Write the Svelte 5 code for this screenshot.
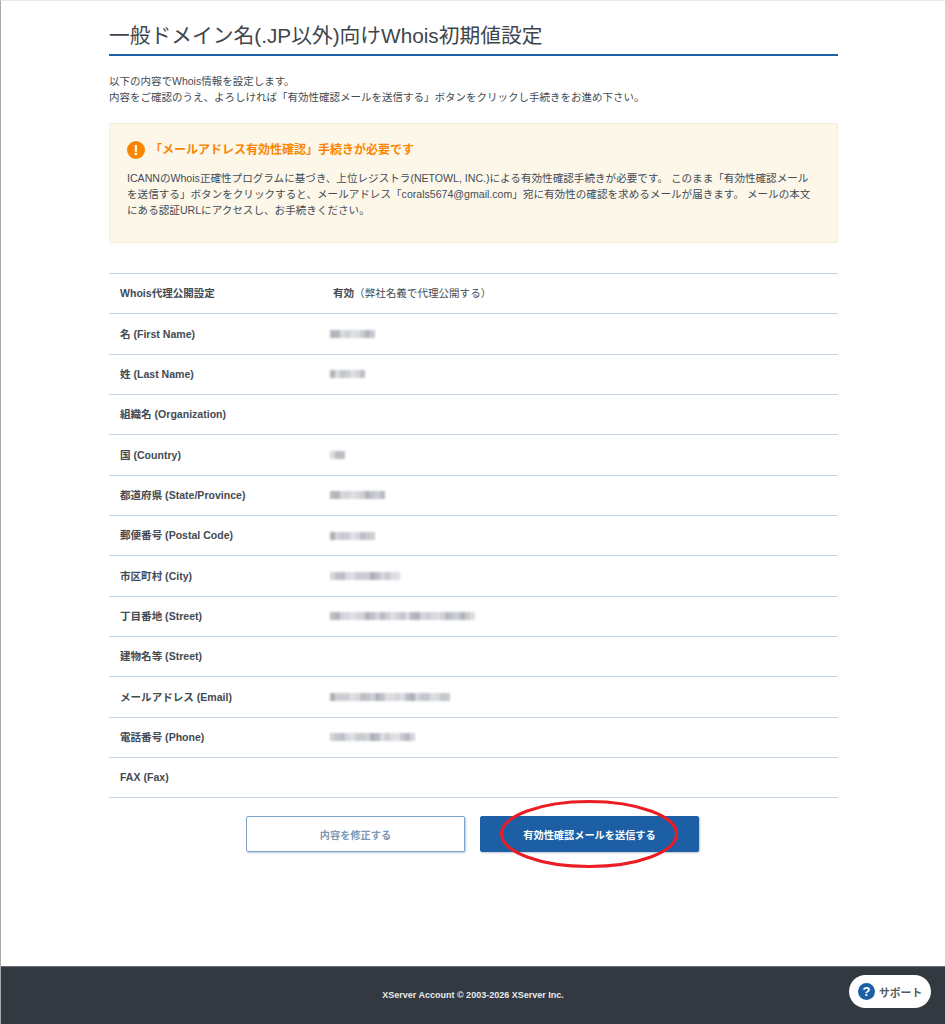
<script>
  // values are masked in the source, so each one is a strip of grey cells
  const mask = (seed, n) => Array.from({ length: n }, (_, i) => {
    const v = Math.abs(Math.sin(seed * 7.3 + i * 1.37) + Math.sin(seed + i * 0.61)) / 2;
    return (0.22 + v * 0.36).toFixed(2);
  });

  const rows = [
    { label: 'Whois代理公開設定', strong: '有効', text: '（弊社名義で代理公開する）' },
    { label: '名 (First Name)', cells: 9, seed: 1 },
    { label: '姓 (Last Name)', cells: 7, seed: 2 },
    { label: '組織名 (Organization)' },
    { label: '国 (Country)', cells: 3, seed: 3 },
    { label: '都道府県 (State/Province)', cells: 11, seed: 4 },
    { label: '郵便番号 (Postal Code)', cells: 9, seed: 5 },
    { label: '市区町村 (City)', cells: 14, seed: 6 },
    { label: '丁目番地 (Street)', cells: 29, seed: 7 },
    { label: '建物名等 (Street)' },
    { label: 'メールアドレス (Email)', cells: 24, seed: 8 },
    { label: '電話番号 (Phone)', cells: 17, seed: 9 },
    { label: 'FAX (Fax)' }
  ];
</script>

<div class="page">
  <main class="content">
    <h1>一般ドメイン名(.JP以外)向けWhois初期値設定</h1>

    <p class="lead">
      以下の内容でWhois情報を設定します。<br />
      内容をご確認のうえ、よろしければ「有効性確認メールを送信する」ボタンをクリックし手続きをお進め下さい。
    </p>

    <section class="notice">
      <div class="notice-head">
        <span class="alert-icon">!</span>
        <span class="notice-title">「メールアドレス有効性確認」手続きが必要です</span>
      </div>
      <p>
        ICANNのWhois正確性プログラムに基づき、上位レジストラ(NETOWL, INC.)による有効性確認手続きが必要です。 このまま「有効性確認メール<br />
        を送信する」ボタンをクリックすると、メールアドレス「corals5674@gmail.com」宛に有効性の確認を求めるメールが届きます。 メールの本文<br />
        にある認証URLにアクセスし、お手続きください。
      </p>
    </section>

    <div class="table">
      {#each rows as row}
        <div class="row">
          <div class="label">{row.label}</div>
          <div class="value">
            {#if row.text}
              <span class="plain"><b>{row.strong}</b>{row.text}</span>
            {:else if row.cells}
              <span class="mask">
                {#each mask(row.seed, row.cells) as o}
                  <i style="opacity:{o}"></i>
                {/each}
              </span>
            {/if}
          </div>
        </div>
      {/each}
    </div>

    <div class="actions">
      <button class="btn ghost">内容を修正する</button>
      <div class="primary-wrap">
        <button class="btn primary">有効性確認メールを送信する</button>
        <svg class="circle" width="182" height="72" viewBox="0 0 182 72" aria-hidden="true">
          <ellipse cx="91" cy="36" rx="87.5" ry="32.5" fill="none" stroke="#ec1c24" stroke-width="3" />
        </svg>
      </div>
    </div>
  </main>

  <footer>
    <span>XServer Account © 2003-2026 XServer Inc.</span>
    <div class="support">
      <span class="q">?</span>
      <span class="support-text">サポート</span>
    </div>
  </footer>
</div>

<style>
  :global(body) { margin: 0; background: #fff; }

  .page {
    width: 945px;
    height: 1024px;
    box-sizing: border-box;
    display: flex;
    flex-direction: column;
    border-left: 1px solid #a8a8a8;
    border-top: 1px solid #e8e8e8;
    font-family: "Liberation Sans", "Noto Sans CJK JP", sans-serif;
    color: #444b53;
    overflow: hidden;
  }

  .content { flex: 1; width: 729px; margin-left: 108px; }

  h1 {
    margin: 0;
    padding: 24px 0 7px;
    height: 22px;
    font-size: 20.75px;
    line-height: 22px;
    font-weight: 400;
    color: #3f454c;
    border-bottom: 2px solid #1d5fa5;
  }

  .lead { margin: 17px 0 0; font-size: 10.5px; line-height: 16px; }

  .notice {
    margin-top: 18px;
    height: 120px;
    box-sizing: border-box;
    padding: 16px 17px;
    background: #fdf7ea;
    border: 1px solid #f6ecd9;
    border-radius: 2px;
  }
  .notice-head { display: flex; align-items: center; gap: 5px; }
  .alert-icon {
    width: 18px;
    height: 18px;
    border-radius: 50%;
    background: #f98500;
    color: #fff;
    font-size: 15px;
    font-weight: 700;
    line-height: 18px;
    text-align: center;
  }
  .notice-title { font-size: 12px; font-weight: 700; color: #f98500; padding-bottom: 3px; }
  .notice p { margin: 10px 0 0; font-size: 10.58px; line-height: 16.2px; }

  .table { margin-top: 30px; border-top: 1px solid #c5d3e6; }
  .row {
    height: 40.35px;
    box-sizing: border-box;
    display: flex;
    align-items: center;
    border-bottom: 1px solid #c5d3e6;
    font-size: 10.55px;
  }
  .label { width: 213px; padding: 0 0 2px 11px; box-sizing: border-box; font-weight: 700; }
  .value { flex: 1; padding-left: 11px; }
  .plain { display: block; padding-bottom: 2px; }
  .mask { display: inline-flex; height: 8px; margin-left: -3px; filter: blur(1.1px); }
  .mask i { width: 5px; height: 8px; background: #6d7480; }

  .actions { display: flex; justify-content: center; gap: 15.5px; margin-top: 18px; padding-right: 2px; }
  .btn {
    width: 218.5px;
    height: 35.5px;
    box-sizing: border-box;
    font: inherit;
    font-size: 10.2px;
    font-weight: 700;
    border-radius: 2px;
    box-shadow: 1px 1px 2px rgba(60, 90, 130, 0.35);
  }
  .ghost { background: #fff; border: 1px solid #7ea3cb; color: #7d97b5; }
  .primary { background: #1d5fa5; border: 1px solid #1d5fa5; color: #fff; }
  .primary-wrap { position: relative; }
  .circle { position: absolute; left: 18px; top: -18px; pointer-events: none; }

  footer {
    position: relative;
    height: 58px;
    flex: none;
    display: flex;
    align-items: center;
    justify-content: center;
    background: #333940;
    color: #e9ebed;
    font-size: 9px;
    font-weight: 700;
    border-top: 1px solid #6b7076;
    box-sizing: border-box;
    padding-bottom: 1px;
  }
  .support {
    position: absolute;
    left: 848px;
    top: 8px;
    width: 82px;
    height: 33px;
    display: flex;
    align-items: center;
    gap: 4px;
    padding-left: 9px;
    box-sizing: border-box;
    background: #fff;
    border-radius: 17px;
  }
  .q {
    width: 17px;
    height: 17px;
    border-radius: 50%;
    background: #1d5fa5;
    color: #fff;
    font-size: 13px;
    line-height: 17px;
    text-align: center;
  }
  .support-text { color: #555b62; font-size: 10.8px; }
</style>
